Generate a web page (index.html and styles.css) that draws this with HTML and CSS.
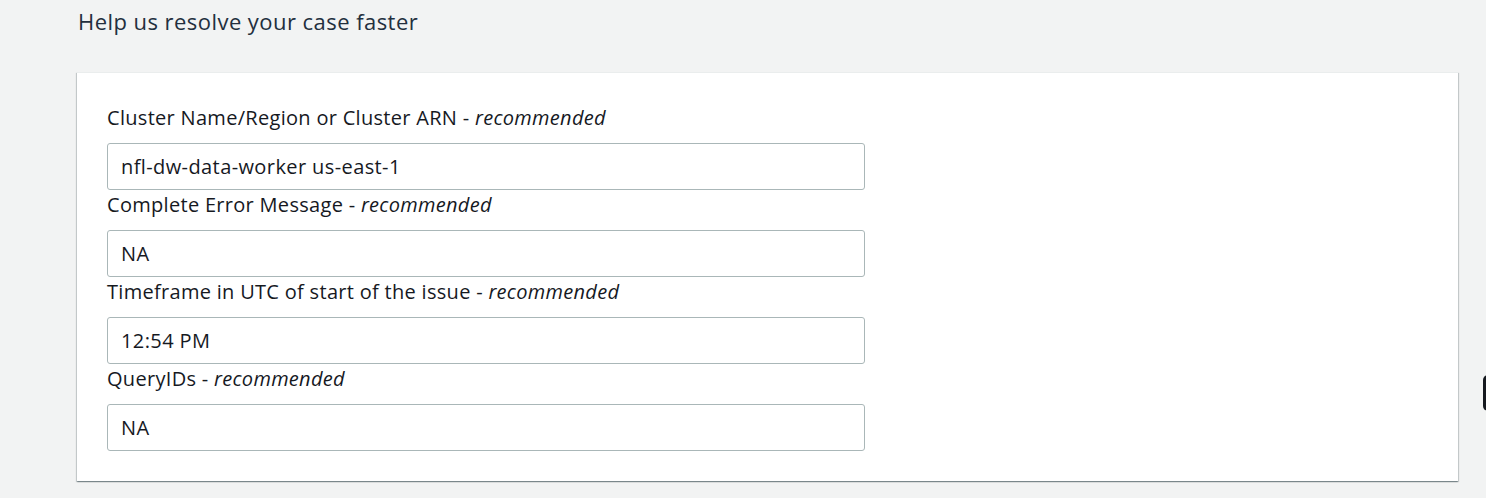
FILE: index.html
```html
<!DOCTYPE html>
<html>
<head>
<meta charset="utf-8">
<link rel="stylesheet" href="styles.css">
</head>
<body>
<div class="page">
  <h2 class="title">Help us resolve your case faster</h2>
  <div class="card">
    <div class="field">
      <label class="label">Cluster Name/Region or Cluster ARN - <em>recommended</em></label>
      <div class="input">nfl-dw-data-worker us-east-1</div>
    </div>
    <div class="field">
      <label class="label">Complete Error Message - <em>recommended</em></label>
      <div class="input">NA</div>
    </div>
    <div class="field">
      <label class="label">Timeframe in UTC of start of the issue - <em>recommended</em></label>
      <div class="input">12:54 PM</div>
    </div>
    <div class="field">
      <label class="label">QueryIDs - <em>recommended</em></label>
      <div class="input">NA</div>
    </div>
  </div>
</div>
<div class="side-tab"></div>
</body>
</html>
```
FILE: styles.css
```css
html, body {
  margin: 0;
  padding: 0;
  background: #f2f3f3;
  font-family: "Open Sans", "Noto Sans", sans-serif;
  color: #16191f;
  height: 498px;
  overflow: hidden;
}
.page {
  padding: 6px 28px 0 77px;
}
.title {
  margin: 0 0 36px 1px;
  font-size: 22px;
  letter-spacing: 0.45px;
  font-weight: 400;
  line-height: 30px;
  color: #232f3e;
}
.card {
  box-sizing: border-box;
  background: #fff;
  width: 1381px;
  padding: 30px 30px 30px 30px;
  box-shadow: 0 1px 1px 0 rgba(0,28,36,0.3), 1px 1px 1px 0 rgba(0,28,36,0.15), -1px 1px 1px 0 rgba(0,28,36,0.15);
  border-top: 1px solid #eaeded;
}
.field {
  display: flex;
  flex-direction: column;
}
.label {
  font-size: 20px;
  letter-spacing: 0.3px;
  line-height: 30px;
  margin-bottom: 10px;
  color: #16191f;
}
.label em {
  font-style: italic;
}
.input {
  box-sizing: border-box;
  width: 758px;
  height: 47px;
  border: 1px solid #aab7b8;
  border-radius: 3px;
  padding: 0 13px;
  font-size: 20px;
  letter-spacing: 0.4px;
  line-height: 45px;
  color: #16191f;
}
.side-tab {
  position: absolute;
  left: 1483px;
  top: 375px;
  width: 10px;
  height: 36px;
  background: #16191f;
  border-radius: 5px;
}
```
